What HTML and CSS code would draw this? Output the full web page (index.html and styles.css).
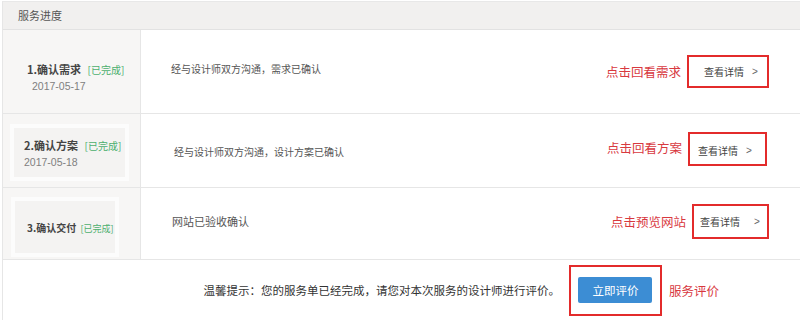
FILE: index.html
```html
<!DOCTYPE html>
<html lang="zh-CN">
<head>
    <meta charset="UTF-8">
    <meta name="viewport" content="width=device-width, initial-scale=1.0">
    <title>服务进度</title>
    <link rel="stylesheet" href="styles.css">
</head>
<body>
    <div class="panel">
        <div class="panel-head">服务进度</div>

        <div class="step step-1">
            <div class="step-side">
                <div class="step-title">1.确认需求 <span class="done">[已完成]</span></div>
                <div class="step-date">2017-05-17</div>
            </div>
            <div class="step-main">
                <div class="step-desc">经与设计师双方沟通，需求已确认</div>
                <div class="note">点击回看需求</div>
                <a href="#" class="detail-btn">查看详情 <span class="arrow">&gt;</span></a>
            </div>
        </div>

        <div class="step step-2">
            <div class="step-side">
                <div class="side-box">
                    <div class="step-title">2.确认方案 <span class="done">[已完成]</span></div>
                    <div class="step-date">2017-05-18</div>
                </div>
            </div>
            <div class="step-main">
                <div class="step-desc">经与设计师双方沟通，设计方案已确认</div>
                <div class="note">点击回看方案</div>
                <a href="#" class="detail-btn">查看详情 <span class="arrow">&gt;</span></a>
            </div>
        </div>

        <div class="step step-3">
            <div class="step-side">
                <div class="side-box">
                    <div class="step-title">3.确认交付 <span class="done small">[已完成]</span></div>
                </div>
            </div>
            <div class="step-main">
                <div class="step-desc">网站已验收确认</div>
                <div class="note">点击预览网站</div>
                <a href="#" class="detail-btn">查看详情 <span class="arrow">&gt;</span></a>
            </div>
        </div>

        <div class="panel-foot">
            <div class="tip">温馨提示：您的服务单已经完成，请您对本次服务的设计师进行评价。</div>
            <div class="rate-box">
                <a href="#" class="rate-btn">立即评价</a>
            </div>
            <div class="note">服务评价</div>
        </div>
    </div>
</body>
</html>
```

FILE: styles.css
```css
body {
    margin: 0;
    background-color: #fff;
    font-family: "Noto Sans CJK SC", "Liberation Sans", sans-serif;
    color: #444;
}
.panel {
    margin: 1px 0 0 2px;
    border-top: 1px solid #e8e8e8;
    border-left: 1px solid #e6e6e6;
}
.panel-head {
    height: 27px;
    line-height: 27px;
    padding-left: 15px;
    background-color: #f1f0ef;
    border-bottom: 1px solid #e2e2e2;
    font-size: 11px;
    color: #555;
}
.step {
    display: grid;
    grid-template-columns: 138px 1fr;
    border-bottom: 1px solid #e6e6e6;
}
.step-1 { height: 83px; }
.step-2 { height: 73px; }
.step-3 { height: 71px; }
.step-side {
    background-color: #f7f6f5;
    border-right: 1px solid #e6e6e6;
    display: flex;
    flex-direction: column;
    justify-content: center;
}
.step-1 .step-side {
    padding: 10px 0 0 24px;
}
.step-2 .step-side {
    padding: 0 0 8px 0;
}
.side-box {
    margin: 12px 0 0 11px;
    width: 111px;
    height: 49px;
    box-sizing: border-box;
    padding: 9px 0 0 10px;
    background-color: #f4f3f2;
    box-shadow: 0 0 0 4px #fcfcfc;
}
.step-3 .side-box {
    margin: 6px 0 0 12px;
    width: 100px;
    height: 52px;
    padding: 19px 0 0 12px;
}
.step-title {
    font-size: 11px;
    font-weight: bold;
    color: #444;
    white-space: nowrap;
}
.step-3 .step-title {
    font-size: 10px;
}
.done {
    font-weight: normal;
    font-size: 10px;
    color: #4caf6e;
    margin-left: 4px;
}
.done.small {
    font-size: 9px;
    margin-left: 2px;
}
.step-date {
    font-family: "Liberation Sans", sans-serif;
    font-size: 10.5px;
    color: #808080;
    margin: 3px 0 0 5px;
}
.step-2 .step-date {
    margin-left: 0;
}
.step-main {
    display: flex;
    align-items: center;
    padding: 0 31px 0 30px;
}
.step-2 .step-main {
    padding: 0 33px 4px 33px;
}
.step-3 .step-main {
    padding: 0 31px 4px 31px;
}
.step-desc {
    flex: 1;
    font-size: 10px;
    color: #555;
}
.step-1 .step-desc {
    margin-bottom: 6px;
}
.step-2 .step-desc {
    margin-top: 5px;
}
.step-3 .step-desc {
    font-size: 11px;
    margin-bottom: 2px;
}
.note {
    font-size: 12.5px;
    color: #d8393f;
    margin-right: 6px;
}
.step-2 .note {
    margin-bottom: 3px;
}
.detail-btn {
    display: flex;
    align-items: center;
    box-sizing: border-box;
    width: 82px;
    height: 33px;
    padding-left: 15px;
    border: 2px solid #e32b2b;
    font-size: 10px;
    color: #444;
    text-decoration: none;
}
.step-2 .detail-btn {
    width: 79px;
    height: 34px;
    padding: 4px 0 0 8px;
}
.step-3 .detail-btn {
    width: 77px;
    height: 35px;
    padding-left: 6px;
}
.arrow {
    font-family: "Liberation Sans", sans-serif;
    margin-left: 8px;
    color: #666;
}
.step-3 .arrow {
    margin-left: 14px;
}
.panel-foot {
    height: 60px;
    display: flex;
    align-items: center;
    justify-content: flex-end;
    padding-right: 75px;
    border-left: 1px solid #fff;
}
.tip {
    font-size: 11.5px;
    color: #333;
    margin-right: 9px;
}
.rate-box {
    box-sizing: border-box;
    width: 93px;
    height: 51px;
    border: 2px solid #e32b2b;
    display: flex;
    align-items: center;
    justify-content: center;
    margin: 0 7px 0 0;
}
.rate-btn {
    display: block;
    width: 74px;
    height: 26px;
    line-height: 26px;
    text-align: center;
    background-color: #3c8dd4;
    border-radius: 2px;
    color: #fff;
    font-size: 11.5px;
    text-decoration: none;
}
```
